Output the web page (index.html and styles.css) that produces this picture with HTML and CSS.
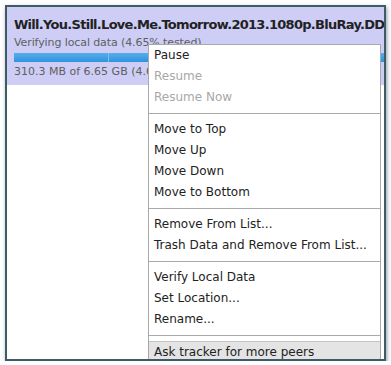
FILE: index.html
```html
<!DOCTYPE html>
<html lang="en">

<head>
    <meta charset="UTF-8">
    <meta name="viewport" content="width=device-width, initial-scale=1.0">
    <title>Transmission</title>
    <link rel="stylesheet" href="styles.css">
</head>

<body>

    <div class="window">
        <div class="torrent">
            <div class="torrent-name">Will.You.Still.Love.Me.Tomorrow.2013.1080p.BluRay.DD5.1.x264</div>
            <div class="torrent-status verify">Verifying local data (4.65% tested)</div>
            <div class="progress">
                <div class="progress-split"></div>
            </div>
            <div class="torrent-status">310.3 MB of 6.65 GB (4.66%)</div>
        </div>

        <ul class="menu">
            <li>Pause</li>
            <li class="disabled">Resume</li>
            <li class="disabled">Resume Now</li>
            <li class="sep"></li>
            <li>Move to Top</li>
            <li>Move Up</li>
            <li>Move Down</li>
            <li>Move to Bottom</li>
            <li class="sep"></li>
            <li>Remove From List...</li>
            <li>Trash Data and Remove From List...</li>
            <li class="sep"></li>
            <li>Verify Local Data</li>
            <li>Set Location...</li>
            <li>Rename...</li>
            <li class="sep"></li>
            <li class="hover">Ask tracker for more peers</li>
        </ul>
    </div>

</body>

</html>
```

FILE: styles.css
```css
body {
    font-family: 'DejaVu Sans', Verdana, sans-serif;
    background-color: #fff;
    margin: 0;
    padding: 0;
}

.window {
    position: relative;
    margin: 5px 0 0 5px;
    width: 377px;
    height: 352px;
    border: 2px solid #3e5c66;
    box-shadow: 1px 2px 4px rgba(40, 60, 70, 0.5);
    background-color: #fff;
    overflow: hidden;
}

.torrent {
    background-color: #cdcdf6;
    padding: 9px 0 0 7px;
    height: 69px;
    white-space: nowrap;
}

.torrent-name {
    font-weight: bold;
    font-size: 13px;
    letter-spacing: -0.72px;
    color: #222;
    line-height: 17px;
}

.torrent-status {
    font-size: 11px;
    color: #606060;
    line-height: 17px;
}

.torrent-status.verify {
    line-height: 20px;
    letter-spacing: -0.1px;
}

.progress {
    position: relative;
    height: 9px;
    margin: 0 0 1px;
    background: linear-gradient(#56aeea, #2f93dc);
}

.progress-split {
    position: absolute;
    left: 94px;
    top: 0;
    width: 1px;
    height: 100%;
    background-color: #7dbde8;
}

.menu {
    position: absolute;
    left: 141px;
    top: 37px;
    width: 231px;
    margin: 0;
    padding: 0;
    list-style: none;
    background-color: #fff;
    border: 1px solid #a8a8a8;
    font-size: 12px;
    color: #222;
}

.menu li {
    height: 21px;
    line-height: 21px;
    padding-left: 5px;
}

.menu li.disabled {
    color: #a8a8a8;
}

.menu li.sep {
    height: 1px;
    padding: 0;
    margin: 5px 0;
    background-color: #aaa;
}

.menu li.hover {
    background-color: #e4e4e4;
    border-top: 1px solid #c4c4c4;
    height: 20px;
    line-height: 20px;
}
```
